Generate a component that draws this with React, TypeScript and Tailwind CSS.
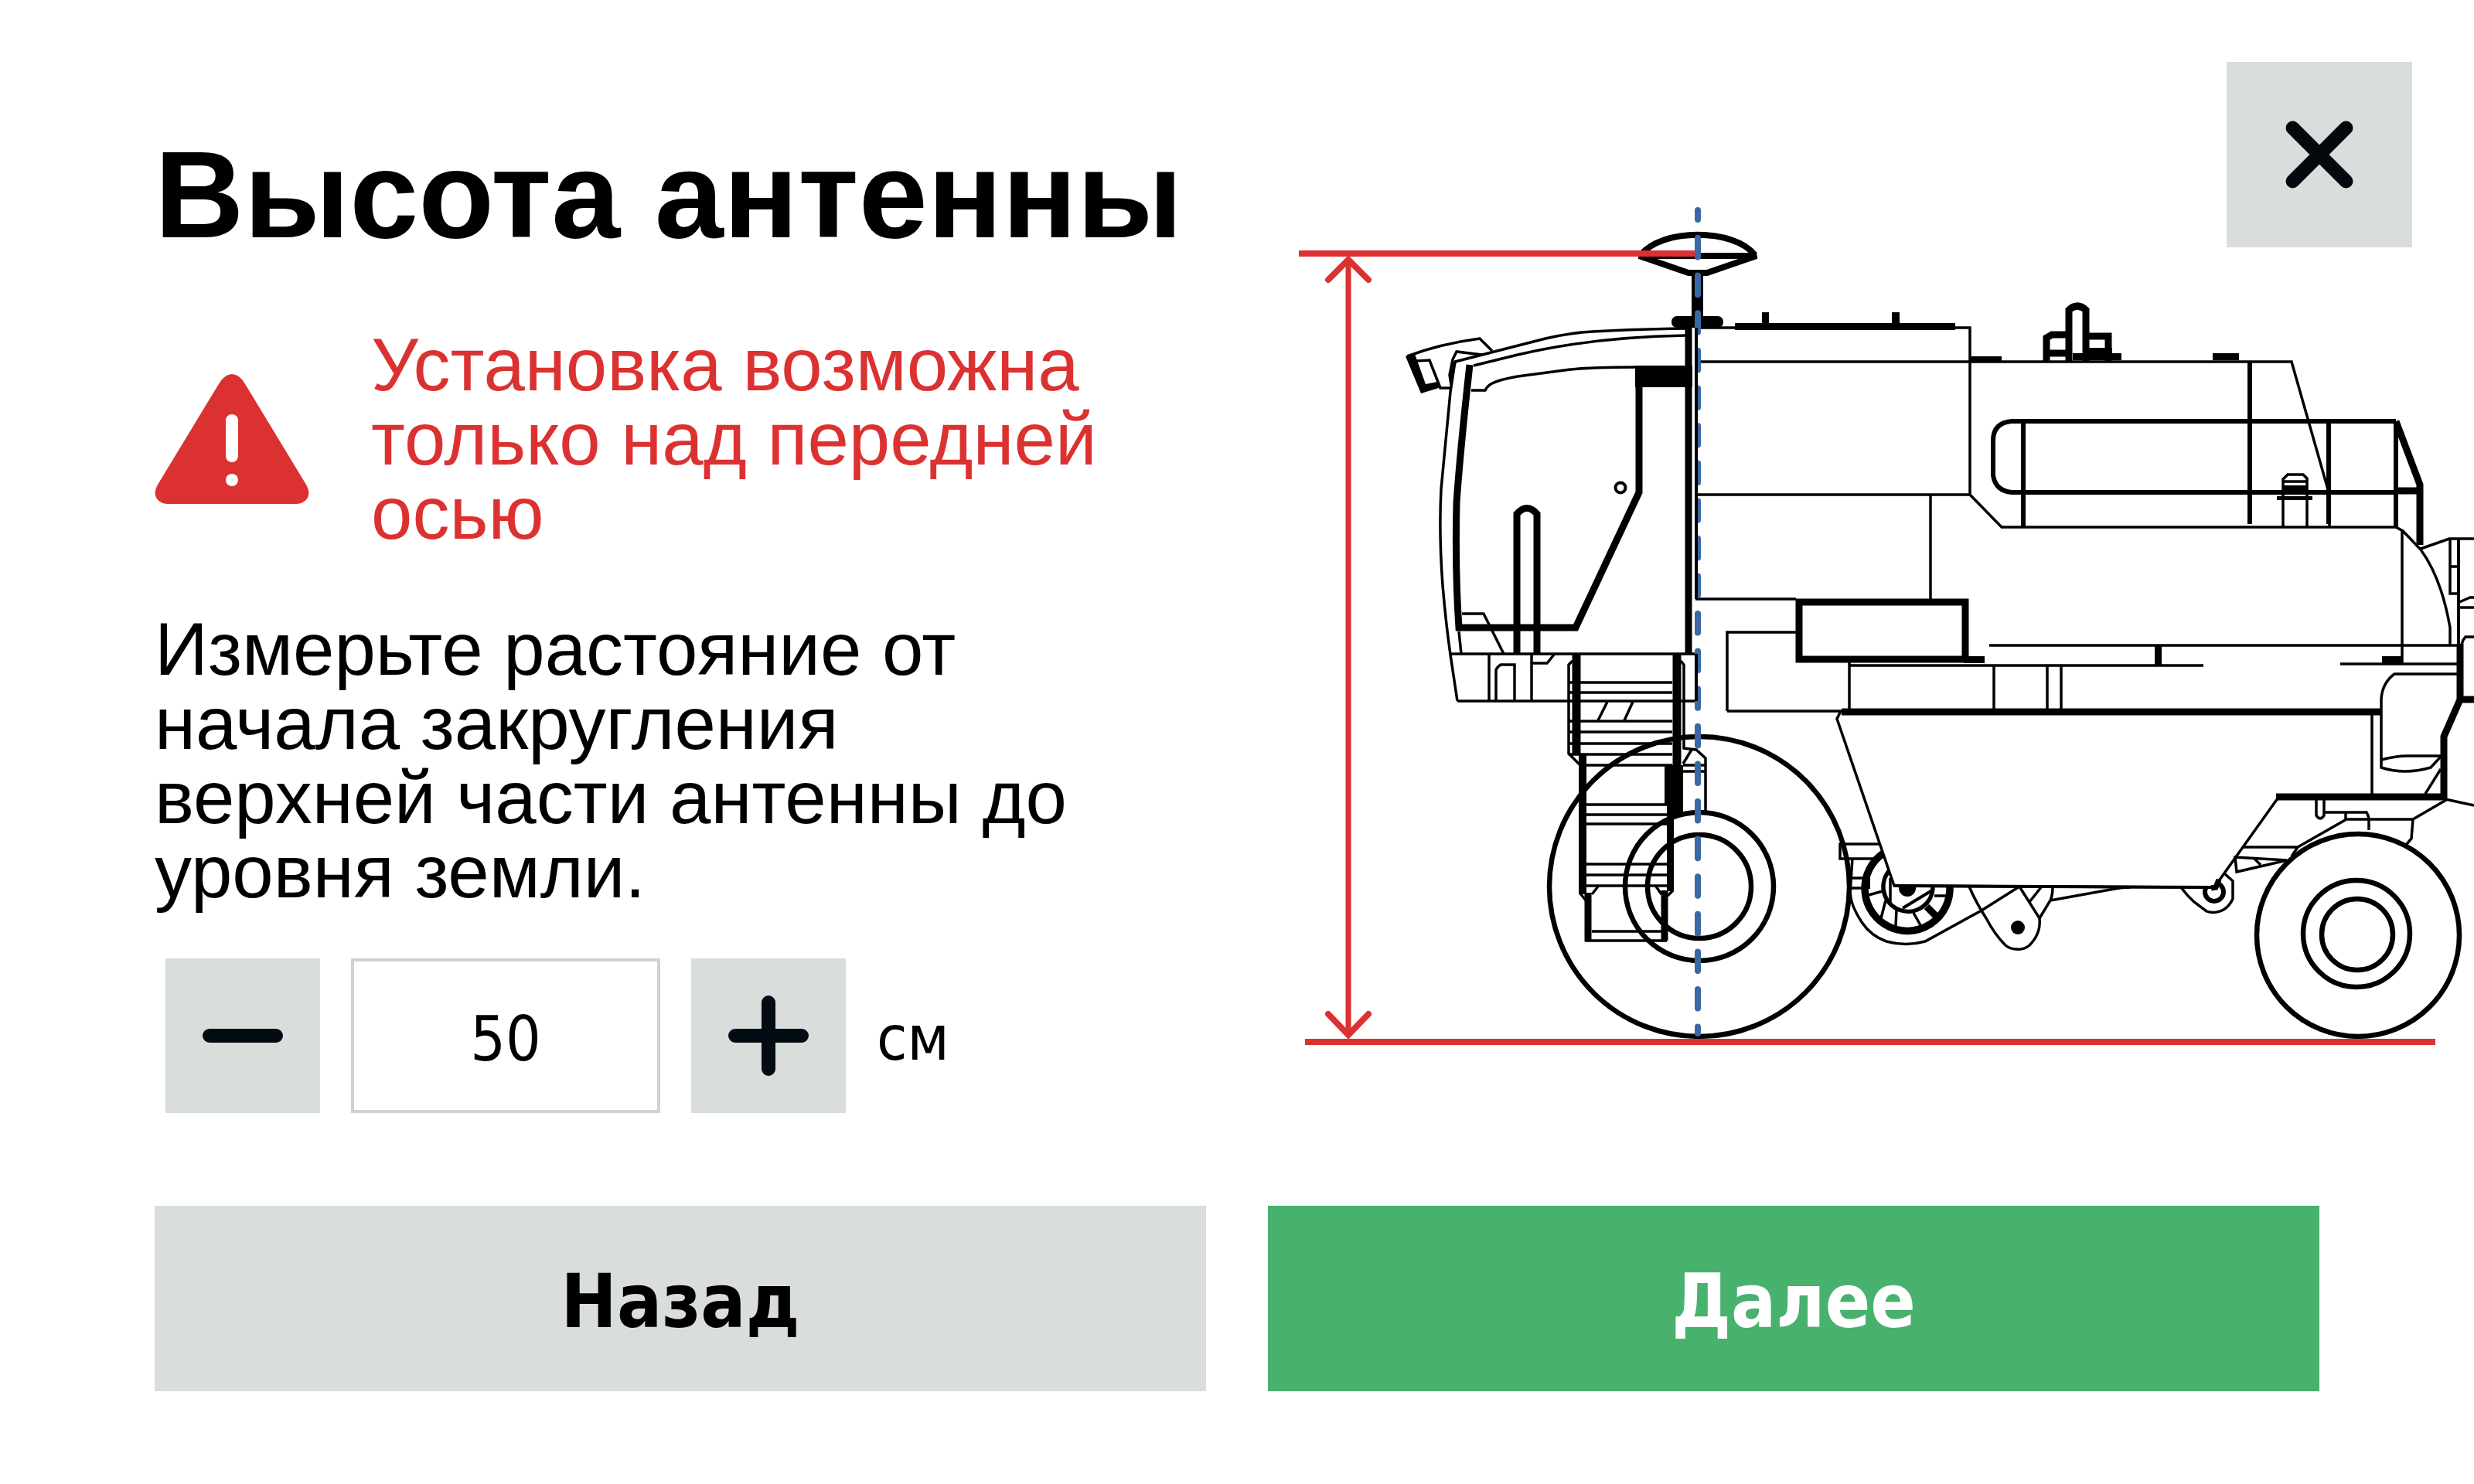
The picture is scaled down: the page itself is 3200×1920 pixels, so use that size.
import React from 'react';

const STEP = 1;

export default function App() {
  const [height, setHeight] = React.useState(50);

  return (
    <main className="relative min-h-screen overflow-hidden bg-white pb-30 font-['Liberation_Sans',Arial,sans-serif] text-black">
      <button
        type="button"
        aria-label="Закрыть"
        className="absolute right-20 top-20 flex size-60 items-center justify-center bg-[#d9dddb]"
      >
        <CloseIcon />
      </button>

      <div className="flex pl-50">
        {/* Instructions */}
        <section className="w-[1460px] shrink-0 pt-43">
          <h1 className="text-[160px] leading-none font-bold whitespace-nowrap">Высота антенны</h1>

          <div className="mt-23 flex max-w-[1240px] items-center gap-20">
            <WarningIcon />
            <p className="text-[96px] leading-none text-[#db3231]">
              Установка возможна только над передней осью
            </p>
          </div>

          <p className="mt-20 max-w-[1240px] text-[96px] leading-none">
            Измерьте растояние от начала закругления верхней части антенны до уровня земли.
          </p>

          <div className="mt-16 flex items-center gap-10 pl-[14px] font-['DejaVu_Sans_Condensed','Noto_Sans',sans-serif] text-[80px]">
            <button
              type="button"
              aria-label="Уменьшить"
              onClick={() => setHeight(height - STEP)}
              className="flex size-50 items-center justify-center bg-[#d9dddb]"
            >
              <MinusIcon />
            </button>
            <input
              id="antenna-height"
              inputMode="numeric"
              value={height}
              onChange={(e) => setHeight(Number(e.target.value) || 0)}
              className="h-50 w-100 border-4 border-[#ccd3d1] bg-white pt-2 text-center"
            />
            <button
              type="button"
              aria-label="Увеличить"
              onClick={() => setHeight(height + STEP)}
              className="flex size-50 items-center justify-center bg-[#d9dddb]"
            >
              <PlusIcon />
            </button>
            <label htmlFor="antenna-height" className="pt-2">см</label>
          </div>
        </section>

        <div className="min-w-0 flex-1 pt-60">
          <HarvesterDiagram />
        </div>
      </div>

      {/* Navigation */}
      <nav className="mt-30 flex gap-20 px-50 font-['DejaVu_Sans_Condensed','Noto_Sans',sans-serif] text-[96px] font-bold">
        <button type="button" className="h-60 flex-1 bg-[#d9dddb] pt-2">Назад</button>
        <button type="button" className="h-60 flex-1 bg-[#48b16e] pt-2 text-white">Далее</button>
      </nav>
    </main>
  );
}

function CloseIcon() {
  return (
    <svg className="size-[88px]" viewBox="0 0 88 88" fill="none" stroke="#03080e" strokeWidth={18} strokeLinecap="round">
      <path d="M9.5 9.5L78.5 78.5M78.5 9.5L9.5 78.5" />
    </svg>
  );
}

function MinusIcon() {
  return (
    <svg className="size-26" viewBox="0 0 104 104" fill="none" stroke="#030c12" strokeWidth={18} strokeLinecap="round">
      <path d="M9 52H95" />
    </svg>
  );
}

function PlusIcon() {
  return (
    <svg className="size-26" viewBox="0 0 104 104" fill="none" stroke="#030c12" strokeWidth={18} strokeLinecap="round">
      <path d="M9 52H95M52 9V95" />
    </svg>
  );
}

function WarningIcon() {
  return (
    <svg className="h-[168px] w-50 shrink-0" viewBox="0 0 200 168">
      <path
        fill="#db3231"
        d="M87 7Q100 -7 113 7Q116 11 119 16L196 143Q204 158 193 165Q189 168 183 168H17Q11 168 7 165Q-4 158 4 143L81 16Q84 11 87 7Z"
      />
      <path d="M100 60V106" stroke="#fff" strokeWidth={16} strokeLinecap="round" />
      <circle cx={100} cy={137} r={8} fill="#fff" />
    </svg>
  );
}

// Side view of the combine with the antenna over the front axle
function HarvesterDiagram() {
  return (
    <svg className="block h-auto w-full" viewBox="1660 240 1540 1140" fill="none" stroke="#000" strokeWidth={3.5}>
      {/* Chopper wheel and brackets under the tank */}
      <path d="M2433 1092H2380V1111H2424M2396 1111L2393 1155Q2394 1172 2408 1193Q2420 1211 2440 1218Q2465 1225 2490 1218L2563 1178L2612 1147" />
      <path d="M2395 1136H2410M2395 1149H2410" />
      <path d="M2436 1104A55 55 0 1 0 2522 1147" strokeWidth={9.5} />
      <path d="M2445 1125A32 32 0 1 0 2500 1147" strokeWidth={5.5} />
      <path d="M2409 1134H2419V1150H2409Z" fill="#000" stroke="none" />
      <path d="M2417 1158L2435 1153M2439 1165L2433 1188M2453 1178L2452 1198M2475 1181L2484 1197M2502 1159H2518M2445 1136V1168" />
      <path d="M2492 1173L2504 1185" strokeWidth={9} />
      <path d="M2461 1175L2499 1152" strokeWidth={4} />
      <circle cx={2467} cy={1149} r={11} fill="#000" stroke="none" />
      <path d="M2547 1147Q2556 1168 2569 1188Q2580 1209 2594 1223Q2600 1228 2608 1228Q2618 1229 2625 1223Q2640 1208 2638 1188L2612 1147" />
      <circle cx={2610} cy={1200} r={9} fill="#000" stroke="none" />
      <path d="M2625 1167L2640 1148M2655 1148Q2655 1158 2652 1165L2638 1188M2652 1165L2735 1150Q2745 1148 2756 1148" />
      <path d="M2821 1148Q2829 1159 2838 1167L2854 1179Q2864 1183 2876 1177Q2884 1172 2888 1163V1140L2876 1129" />
      <circle cx={2864} cy={1154} r={12} strokeWidth={6} />

      {/* Tank */}
      <path d="M2384 920L2376 930L2450 1145L2864 1148L2946 1033V921Z" fill="#fff" stroke="none" />
      <path d="M2381 920L2376 930L2450 1146L2864 1148L2946 1033" />
      <path d="M2450 1146L2864 1148" strokeWidth={4} />
      <path d="M2860 1149L2866 1148L2870 1138" strokeWidth={7} />

      {/* Work light */}
      <path d="M1820 461Q1862 445 1914 438L1930 454" />
      <path d="M1818 461L1830 458L1844 497L1859 494L1864 501L1838 509Z" fill="#000" stroke="none" />
      <path d="M1832 467L1849 466L1863 502H1876" />
      <path d="M1877 498L1875 485L1879 465L1884 455L1917 459M1876 488L1882 469" />

      {/* Cab roof and windscreen */}
      <path d="M2180 425Q2100 426 2046 430Q2020 433 1999 438L1882 468L1876 507L1864 633Q1861 690 1866 757Q1870 805 1876 847L1885 907" />
      <path d="M1906 473L1963 459Q2060 436 2180 434" />
      <path d="M1901 472Q1889 580 1884 650Q1882 740 1887 812H2038L2120 637V475" strokeWidth={9} />
      <path d="M1903 505H1921Q1924 499 1930 496Q1940 491 1963 487L2031 478Q2060 475 2115 475" />
      <path d="M2115 473H2189V501H2115Z" fill="#000" stroke="none" />
      <path d="M2184 424V846" strokeWidth={9} />
      <circle cx={2096} cy={631} r={6.5} strokeWidth={4} />
      <path d="M1962 846V665Q1975 650 1988 665V846" strokeWidth={9} />
      <path d="M1891 794H1919L1945 846M1887 817L1890 846" />

      {/* Cab base */}
      <path d="M1876 846H2195M1885 907H2195M1926 846V907M1981 846V907M1935 907V868Q1935 864 1941 860H1959V907M1982 858H2001L2010 847" />

      {/* Ladder */}
      <path d="M2034 855L2029 860V975L2043 989M2174 855L2178 860V969" />
      <path d="M2039 846V977M2169 846V992" strokeWidth={11} />
      <path d="M2029 883H2163M2029 896H2163M2029 933H2163M2029 947H2163M2029 962H2163M2029 976H2163M2052 990H2163" />
      <path d="M2079 908L2067 932M2112 908L2101 932" />
      <path d="M2047 976V1157" strokeWidth={10} />
      <path d="M2153 990H2177V1050L2165 1058V1153H2156V1041H2153Z" fill="#000" stroke="none" />
      <path d="M2052 1041H2156M2052 1054H2156M2052 1066H2156M2052 1118H2156M2052 1132H2156M2052 1146H2156" />
      <path d="M2054 1155V1218M2153 1152V1217" strokeWidth={9} />
      <path d="M2059 1205H2149M2050 1217H2156M2067 1147L2059 1157M2142 1147L2149 1157M2044 1156L2052 1166M2164 1152L2157 1159" />
      <path d="M2177 968L2194 970L2206 981V1052M2188 970L2177 988M2177 990H2206M2177 998H2206" />

      {/* Grain bin */}
      <path d="M2195 424H2548V640M2195 468H2964L3011 633M2195 640H2548L2589 682H3099M2497 640V775M2193 775H2323" />
      <path d="M2244 418H2529V427H2244ZM2279 404H2288V418H2279ZM2447 404H2457V418H2447ZM2548 461H2589V469H2548ZM2862 457H2896V466H2862Z" fill="#000" stroke="none" />
      <path d="M2647 468V437L2654 433H2672M2643 457H2672M2676 468V401Q2687 391 2698 401V468M2702 435H2727V468" strokeWidth={9} />
      <path d="M2702 450H2732V466H2702ZM2681 457H2744V466H2681Z" fill="#000" stroke="none" />

      {/* Handrail */}
      <path d="M3099 545H2602Q2578 547 2578 570V615Q2581 635 2602 637H3099M2617 545V682M2910 468V678M3012 545V678M3099 545V682" strokeWidth={6} />
      <path d="M3099 545L3130 627V705M3099 635H3130" strokeWidth={9} />
      <path d="M2953 682V620L2959 614H2979L2984 619V682M2953 623H2984M3013 678V682" />
      <path d="M2952 628H2985V638H2952ZM2945 642H2991V647H2945Z" fill="#000" stroke="none" />

      {/* Engine hood */}
      <path d="M3099 682L3108 687L3131 711Q3158 748 3169 812V835M3107 686V858M3131 710L3168 697H3200M3169 697V768H3179M3169 733H3179" />
      <path d="M3180 697V835" strokeWidth={4} />
      <path d="M3181 779L3195 773H3200M3181 786H3200M3184 834L3186 828L3189 824H3200" />
      <path d="M2573 835H3180M2393 861H2850M3027 859H3179M2392 857V917M2579 861V917M2648 861V917M2666 861V917M2234 920H2384M2323 818H2234V920" />
      <path d="M2787 835H2796V861H2787ZM3081 849H3108V859H3081ZM2540 849H2567V858H2540Z" fill="#000" stroke="none" />
      <path d="M2327 779H2542V853H2327Z" strokeWidth={9} />
      <path d="M2382 921H3080M3182 833V905L3161 953V1031H2944M3178 905H3200" strokeWidth={9} />
      <path d="M3178 872H3097Q3081 884 3080 905V993Q3110 1003 3144 993L3157 979M3080 983Q3100 978 3113 978H3157M3157 995L3137 1027M3068 921V1027M3163 1034L3200 1042" />

      {/* Rear axle */}
      <path d="M2901 1096H2972L3035 1060H3121L3164 1035M3121 1060L3119 1085L3113 1092M2891 1109L2958 1113L2893 1128ZM2916 1111L2924 1119M2972 1096L2964 1108" />
      <path d="M2996 1035V1055Q3001 1063 3006 1055V1035M3006 1051H3061Q3064 1056 3064 1060V1074M3034 1051V1060" />

      {/* Wheels */}
      <g strokeWidth={6.5}>
        <circle cx={2198} cy={1147} r={194} />
        <circle cx={2198} cy={1147} r={96} />
        <circle cx={2198} cy={1147} r={67} />
        <circle cx={3050} cy={1210} r={131} />
        <circle cx={3048} cy={1208} r={69} />
        <circle cx={3049} cy={1209} r={46} />
      </g>

      {/* Antenna */}
      <path d="M2122 330C2150 295 2242 295 2270 330M2120 331L2184 353H2208L2272 331Z" strokeWidth={8} />
      <path d="M2188 353H2203V412H2188Z" fill="#000" stroke="none" />
      <rect x={2162} y={409} width={67} height={15} rx={7} fill="#000" stroke="none" />

      {/* Measured height */}
      <g stroke="#db3231" strokeWidth={8}>
        <path d="M1680 328H2193M1688 1348H3150" />
        <path d="M1744 336V1340" strokeWidth={7} />
        <path d="M1718 362L1744 336L1770 362M1718 1312L1744 1339L1770 1312" strokeLinecap="round" />
      </g>

      {/* Front axle line */}
      <path d="M2196 272V284" stroke="#3a68a5" strokeWidth={8} strokeLinecap="round" />
      <path d="M2196 308V1337" stroke="#3a68a5" strokeWidth={8} strokeLinecap="round" strokeDasharray="24.6 24" />
      <path d="M2194 424V775M2194 846V907" strokeWidth={4} />
    </svg>
  );
}
